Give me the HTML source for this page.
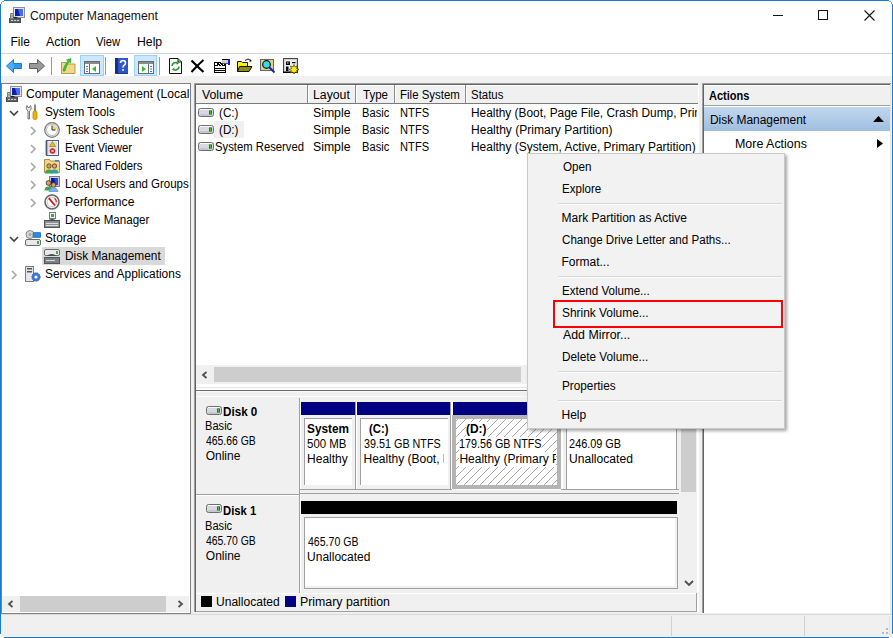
<!DOCTYPE html>
<html><head><meta charset="utf-8">
<style>
*{margin:0;padding:0;box-sizing:border-box}
html,body{width:893px;height:638px;overflow:hidden;background:#fff}
body{position:relative;font-family:"Liberation Sans",sans-serif;font-size:12px;color:#000}
.a{position:absolute}
.t{position:absolute;white-space:nowrap;line-height:14px;height:14px}
.b{font-weight:bold}
</style></head><body>
<div class="a" style="left:4px;top:0px;width:885px;height:1px;background:#1a7ad0"></div>
<div class="a" style="left:0px;top:4px;width:1px;height:630px;background:#1a7ad0"></div>
<div class="a" style="left:892px;top:4px;width:1px;height:630px;background:#1a7ad0"></div>
<div class="a" style="left:4px;top:637px;width:885px;height:1px;background:#1a7ad0"></div>
<div class="a" style="left:3px;top:1px;width:1px;height:1px;background:#1a7ad0;opacity:.6"></div>
<div class="a" style="left:2px;top:1px;width:1px;height:1px;background:#1a7ad0;opacity:.6"></div>
<div class="a" style="left:1px;top:2px;width:1px;height:1px;background:#1a7ad0;opacity:.6"></div>
<div class="a" style="left:1px;top:3px;width:1px;height:1px;background:#1a7ad0;opacity:.6"></div>
<div class="a" style="left:889px;top:1px;width:1px;height:1px;background:#1a7ad0;opacity:.6"></div>
<div class="a" style="left:890px;top:1px;width:1px;height:1px;background:#1a7ad0;opacity:.6"></div>
<div class="a" style="left:891px;top:2px;width:1px;height:1px;background:#1a7ad0;opacity:.6"></div>
<div class="a" style="left:891px;top:3px;width:1px;height:1px;background:#1a7ad0;opacity:.6"></div>
<div class="a" style="left:1px;top:634px;width:1px;height:1px;background:#1a7ad0;opacity:.6"></div>
<div class="a" style="left:1px;top:635px;width:1px;height:1px;background:#1a7ad0;opacity:.6"></div>
<div class="a" style="left:2px;top:636px;width:1px;height:1px;background:#1a7ad0;opacity:.6"></div>
<div class="a" style="left:3px;top:636px;width:1px;height:1px;background:#1a7ad0;opacity:.6"></div>
<div class="a" style="left:889px;top:636px;width:1px;height:1px;background:#1a7ad0;opacity:.6"></div>
<div class="a" style="left:890px;top:636px;width:1px;height:1px;background:#1a7ad0;opacity:.6"></div>
<div class="a" style="left:891px;top:635px;width:1px;height:1px;background:#1a7ad0;opacity:.6"></div>
<div class="a" style="left:891px;top:634px;width:1px;height:1px;background:#1a7ad0;opacity:.6"></div>
<svg class="a" style="left:9px;top:7px;" width="16" height="16" viewBox="0 0 16 16"><rect x="4.5" y="0.5" width="11" height="10" fill="#e4e6ea" stroke="#8a8f96"/><rect x="6" y="2" width="8" height="7" fill="#4a6cf0"/><path d="M6 2h3l2 7H6z" fill="#0c1fa8"/><rect x="0.5" y="11.5" width="11" height="4" fill="#5c6066" stroke="#4a4e54"/><rect x="2" y="13" width="2" height="1" fill="#cfd2d6"/><rect x="5" y="13" width="2" height="1" fill="#cfd2d6"/><rect x="8" y="13" width="2" height="1" fill="#cfd2d6"/><path d="M1.5 6.5h3v5h-3z" fill="#b8bcc0" stroke="#7a7e84" stroke-width="1"/><path d="M2.5 8h1v2h-1z" fill="#3bb03b"/><path d="M4 11 q2.5-2.5 5 0" fill="#222"/></svg>
<div class="t " style="left:30.00px;top:8.80px;transform:scaleX(1.0144);transform-origin:1px 0;color:#111">Computer Management</div>
<div class="a" style="left:773px;top:15px;width:10px;height:1px;background:#111"></div>
<div class="a" style="left:818px;top:10px;width:10px;height:10px;border:1px solid #111"></div>
<svg class="a" style="left:864px;top:10px;" width="11" height="11" viewBox="0 0 11 11"><path d="M0.5 0.5L10.5 10.5M10.5 0.5L0.5 10.5" stroke="#111" stroke-width="1.1"/></svg>
<div class="t " style="left:10.50px;top:34.80px;">File</div>
<div class="t " style="left:45.50px;top:34.80px;transform:scaleX(1.0333);transform-origin:0px 0;">Action</div>
<div class="t " style="left:96.40px;top:34.80px;transform:scaleX(0.9346);transform-origin:0px 0;">View</div>
<div class="t " style="left:136.50px;top:34.80px;transform:scaleX(1.0217);transform-origin:1px 0;">Help</div>
<div class="a" style="left:1px;top:53px;width:891px;height:1px;background:#d5d5d5"></div>
<svg class="a" style="left:5px;top:58px;" width="18" height="16" viewBox="0 0 18 16"><path d="M1.5 8L8.5 1.5V5.5H16.5V10.5H8.5V14.5Z" fill="#48aef0" stroke="#1f7ad0" stroke-width="1"/><path d="M9 6h7v4H9z" fill="#1e8ae0" opacity=".6"/></svg>
<svg class="a" style="left:28px;top:58px;" width="18" height="16" viewBox="0 0 18 16"><path d="M16.5 8L9.5 1.5V5.5H1.5V10.5H9.5V14.5Z" fill="#9a9a9a" stroke="#5e5e5e" stroke-width="1"/></svg>
<div class="a" style="left:51px;top:57px;width:1px;height:18px;background:#9a9a9a"></div>
<svg class="a" style="left:60px;top:57px;" width="16" height="18" viewBox="0 0 16 18"><path d="M1.5 5.5h5l1 1.5h7.5v9.5h-13.5z" fill="#f3d68a" stroke="#c09a48"/><path d="M3 14 C4 9 6 6 8 4 L6.5 3 L11 1.5 L10.5 6 L9.2 4.8 C7.5 7 6 10 5 14z" fill="#38c838" stroke="#1f9a1f" stroke-width=".6"/></svg>
<div class="a" style="left:80px;top:55px;width:24px;height:21px;background:#cce8ff;border:1px solid #99d1ff"></div>
<svg class="a" style="left:84px;top:61px;" width="16" height="13" viewBox="0 0 16 13"><rect x="0.5" y="0.5" width="15" height="12" fill="#fff" stroke="#6a6a6a"/><rect x="1" y="1" width="14" height="2" fill="#8a8a8a"/><path d="M5.5 3v9.5" stroke="#6a6a6a"/><rect x="2" y="5" width="2" height="1" fill="#3c7ad8"/><rect x="2" y="7.5" width="2" height="1" fill="#3c7ad8"/><rect x="2" y="10" width="2" height="1" fill="#3c7ad8"/><path d="M12 5v6L8 8z" fill="#3ab53a"/></svg>
<div class="a" style="left:105px;top:57px;width:1px;height:18px;background:#9a9a9a"></div>
<svg class="a" style="left:115px;top:58px;" width="13" height="16" viewBox="0 0 13 16"><rect x="0" y="0" width="13" height="16" fill="#2c55c8"/><rect x="0" y="0" width="3" height="16" fill="#12308a"/><rect x="0" y="15" width="13" height="1" fill="#1a3a9a"/><path d="M5.5 5 q0-2.5 2.5-2.5 q2.5 0 2.5 2.5 q0 1.5-1.7 2.5 q-0.8 .5-.8 2" fill="none" stroke="#fff" stroke-width="1.6"/><rect x="7.2" y="11" width="1.7" height="1.8" fill="#fff"/></svg>
<div class="a" style="left:134px;top:55px;width:23px;height:21px;background:#cce8ff;border:1px solid #99d1ff"></div>
<svg class="a" style="left:138px;top:61px;" width="16" height="13" viewBox="0 0 16 13"><rect x="0.5" y="0.5" width="15" height="12" fill="#fff" stroke="#6a6a6a"/><rect x="1" y="1" width="14" height="2" fill="#8a8a8a"/><path d="M10.5 3v9.5" stroke="#6a6a6a"/><rect x="12" y="5" width="2" height="1" fill="#3c7ad8"/><rect x="12" y="7.5" width="2" height="1" fill="#3c7ad8"/><rect x="12" y="10" width="2" height="1" fill="#3c7ad8"/><path d="M4 5v6l4-3z" fill="#3ab53a"/></svg>
<div class="a" style="left:159px;top:57px;width:1px;height:18px;background:#9a9a9a"></div>
<svg class="a" style="left:168px;top:58px;" width="15" height="16" viewBox="0 0 15 16"><path d="M1.5 0.5h8.5l3.5 3.5v11.5h-12z" fill="#fff" stroke="#111"/><path d="M10 0.5v3.5h3.5" fill="none" stroke="#111"/><path d="M4 8a3.5 3.5 0 0 1 5.5-2.8" fill="none" stroke="#1ea01e" stroke-width="1.6"/><path d="M8.5 3.5l2.5 1.5-2.2 2z" fill="#1ea01e"/><path d="M11 8.5a3.5 3.5 0 0 1-5.5 2.8" fill="none" stroke="#1ea01e" stroke-width="1.6"/><path d="M6.5 13l-2.5-1.5 2.2-2z" fill="#1ea01e"/></svg>
<svg class="a" style="left:190px;top:59px;" width="15" height="14" viewBox="0 0 15 14"><path d="M1.5 1.5 C5 5 10 10 13.5 13" stroke="#000" stroke-width="2.2" fill="none"/><path d="M13.5 1 C10 4 5 9 1.5 13" stroke="#000" stroke-width="2" fill="none"/></svg>
<svg class="a" style="left:213px;top:57px;" width="17" height="17" viewBox="0 0 17 17"><rect x="1" y="5" width="12" height="11" fill="#000"/><rect x="2" y="9" width="10" height="2" fill="#f0f0f0"/><rect x="2" y="12" width="10" height="1" fill="#f0f0f0"/><rect x="2" y="14" width="10" height="1" fill="#f0f0f0"/><rect x="2" y="6" width="2" height="2" fill="#fff"/><path d="M5 8h1v1h-1zM7 7h1v1h-1zM6 6h1v1h-1zM8 5h1v1h-1zM9 6h1v1h-1zM10 7h1v1h-1zM8 8h1v1h-1zM11 6h1v1h-1zM10 5h1v1h-1z" fill="#fff"/><rect x="9" y="2" width="6" height="5" fill="#cfcfcf"/><rect x="9" y="2" width="6" height="1" fill="#000"/><rect x="9" y="6" width="6" height="1" fill="#555"/><rect x="15" y="2" width="2" height="6" fill="#1020d0"/></svg>
<svg class="a" style="left:237px;top:58px;" width="16" height="14" viewBox="0 0 16 14"><path d="M0.5 3.5h4l1 1h5v8.5H0.5z" fill="#fff200" stroke="#111"/><path d="M2.5 8.5h12.5l-3 5H0.5z" fill="#8c8c1c" stroke="#111"/><path d="M8 2.5 q3-3 6 0" fill="none" stroke="#111"/><path d="M13 1.5l2 1.5-2.5 1z" fill="#111"/></svg>
<svg class="a" style="left:260px;top:58px;" width="16" height="16" viewBox="0 0 16 16"><rect x="0.5" y="1.5" width="13" height="11" fill="#f4e870" stroke="#666"/><rect x="1" y="2" width="12" height="10" fill="#c8c0a0" opacity=".5"/><circle cx="6.5" cy="6.5" r="3.8" fill="#40d8e8" stroke="#111" stroke-width="1.2"/><path d="M9 9l5.5 5.5" stroke="#1020c0" stroke-width="1.8"/></svg>
<svg class="a" style="left:283px;top:58px;" width="16" height="16" viewBox="0 0 16 16"><rect x="0.5" y="0.5" width="14" height="14" fill="#d0d0d0" stroke="#444"/><rect x="2" y="2" width="11" height="11" fill="#ececec"/><rect x="0" y="13.5" width="15" height="1.5" fill="#000"/><rect x="3" y="3.5" width="4" height="3.5" fill="#000"/><rect x="4" y="4.5" width="1.5" height="1" fill="#fff"/><rect x="9" y="4" width="3.5" height="1.2" fill="#000"/><rect x="3" y="8.5" width="2.5" height="4.5" fill="#000"/><path d="M11 6.5l1 2.5 2.5-1-1 2.5 2.5 1-2.5 1 1 2.5-2.5-1-1 2.5-1-2.5-2.5 1 1-2.5-2.5-1 2.5-1-1-2.5 2.5 1z" fill="#ffee00" stroke="#222" stroke-width=".6"/></svg>
<div class="a" style="left:1px;top:76px;width:891px;height:538px;background:#f0f0f0"></div>
<div class="a" style="left:1px;top:83px;width:190px;height:531px;background:#fff;border:1px solid #828282"></div>
<div class="t " style="left:26.30px;top:87.30px;transform:scaleX(1.0081);transform-origin:1px 0;">Computer Management (Local</div>
<svg class="a" style="left:9px;top:110px;" width="10" height="7" viewBox="0 0 10 7"><path d="M1 1l4 4 4-4" fill="none" stroke="#404040" stroke-width="1.6"/></svg>
<div class="t " style="left:45.00px;top:105.30px;transform:scaleX(0.9814);transform-origin:1px 0;">System Tools</div>
<svg class="a" style="left:30px;top:126px;" width="7" height="10" viewBox="0 0 7 10"><path d="M1 1l4 4-4 4" fill="none" stroke="#a6a6a6" stroke-width="1.6"/></svg>
<div class="t " style="left:65.50px;top:123.30px;transform:scaleX(0.9415);transform-origin:0px 0;">Task Scheduler</div>
<svg class="a" style="left:30px;top:144px;" width="7" height="10" viewBox="0 0 7 10"><path d="M1 1l4 4-4 4" fill="none" stroke="#a6a6a6" stroke-width="1.6"/></svg>
<div class="t " style="left:64.50px;top:141.30px;transform:scaleX(0.9514);transform-origin:1px 0;">Event Viewer</div>
<svg class="a" style="left:30px;top:162px;" width="7" height="10" viewBox="0 0 7 10"><path d="M1 1l4 4-4 4" fill="none" stroke="#a6a6a6" stroke-width="1.6"/></svg>
<div class="t " style="left:64.50px;top:159.30px;transform:scaleX(0.9444);transform-origin:1px 0;">Shared Folders</div>
<svg class="a" style="left:30px;top:180px;" width="7" height="10" viewBox="0 0 7 10"><path d="M1 1l4 4-4 4" fill="none" stroke="#a6a6a6" stroke-width="1.6"/></svg>
<div class="t " style="left:64.50px;top:177.30px;transform:scaleX(0.9555);transform-origin:1px 0;">Local Users and Groups</div>
<svg class="a" style="left:30px;top:198px;" width="7" height="10" viewBox="0 0 7 10"><path d="M1 1l4 4-4 4" fill="none" stroke="#a6a6a6" stroke-width="1.6"/></svg>
<div class="t " style="left:64.50px;top:195.30px;transform:scaleX(1.0104);transform-origin:1px 0;">Performance</div>
<div class="t " style="left:64.50px;top:213.30px;transform:scaleX(0.9655);transform-origin:1px 0;">Device Manager</div>
<svg class="a" style="left:9px;top:236px;" width="10" height="7" viewBox="0 0 10 7"><path d="M1 1l4 4 4-4" fill="none" stroke="#404040" stroke-width="1.6"/></svg>
<div class="t " style="left:45.00px;top:231.30px;transform:scaleX(0.9805);transform-origin:1px 0;">Storage</div>
<div class="a" style="left:42px;top:247px;width:123px;height:18px;background:#d9d9d9"></div>
<div class="t " style="left:64.50px;top:249.30px;transform:scaleX(0.9896);transform-origin:1px 0;">Disk Management</div>
<svg class="a" style="left:11px;top:270px;" width="7" height="10" viewBox="0 0 7 10"><path d="M1 1l4 4-4 4" fill="none" stroke="#a6a6a6" stroke-width="1.6"/></svg>
<div class="t " style="left:45.00px;top:267.30px;transform:scaleX(0.9933);transform-origin:1px 0;">Services and Applications</div>
<svg class="a" style="left:6px;top:86px;" width="16" height="16" viewBox="0 0 16 16"><rect x="4.5" y="0.5" width="11" height="10" fill="#e4e6ea" stroke="#8a8f96"/><rect x="6" y="2" width="8" height="7" fill="#4a6cf0"/><path d="M6 2h3l2 7H6z" fill="#0c1fa8"/><rect x="0.5" y="11.5" width="11" height="4" fill="#5c6066" stroke="#4a4e54"/><rect x="2" y="13" width="2" height="1" fill="#cfd2d6"/><rect x="5" y="13" width="2" height="1" fill="#cfd2d6"/><rect x="8" y="13" width="2" height="1" fill="#cfd2d6"/><path d="M1.5 6.5h3v5h-3z" fill="#b8bcc0" stroke="#7a7e84" stroke-width="1"/><path d="M2.5 8h1v2h-1z" fill="#3bb03b"/><path d="M4 11 q2.5-2.5 5 0" fill="#222"/></svg>
<svg class="a" style="left:25px;top:104px;" width="16" height="16" viewBox="0 0 16 16"><path d="M3 15V7 C1 6 1 3 2 1.5 L3 3.5 L4.5 3.5 L5.5 1.5 C6.5 3 6.5 6 4.5 7 V15z" fill="#e8e8e8" stroke="#6a6a6a" stroke-width=".9"/><rect x="9.3" y="0.5" width="1.4" height="7" fill="#555"/><rect x="8" y="7" width="4" height="8.5" rx="1.5" fill="#f0b400" stroke="#b07800" stroke-width=".7"/></svg>
<svg class="a" style="left:44px;top:122px;" width="16" height="16" viewBox="0 0 16 16"><circle cx="8" cy="8" r="7.3" fill="#e8e8e8" stroke="#7a7a7a" stroke-width="1.2"/><circle cx="8" cy="8" r="5.5" fill="#fff" stroke="#9a9a9a" stroke-width=".6"/><path d="M8 8V3.5A4.5 4.5 0 0 1 12.5 8z" fill="#f3d070"/><path d="M8 3.5V8h3.5" fill="none" stroke="#333" stroke-width="1"/></svg>
<svg class="a" style="left:44px;top:140px;" width="16" height="16" viewBox="0 0 16 16"><rect x="2.5" y="0.5" width="12" height="15" fill="#f4f6fb" stroke="#4a5a8a"/><path d="M4 3h9M4 5h9M4 7h9M4 9h9M4 11h9M4 13h9" stroke="#9ab0dc" stroke-width=".6"/><path d="M1 2h3M1 4h3M1 6h3M1 8h3M1 10h3M1 12h3M1 14h3" stroke="#555" stroke-width=".8"/><path d="M8.5 1.5l3 5h-6z" fill="#f3c400" stroke="#8a6a00" stroke-width=".6"/><circle cx="8.5" cy="11" r="2.8" fill="#d42020"/><path d="M7.3 9.8l2.4 2.4M9.7 9.8l-2.4 2.4" stroke="#fff" stroke-width=".9"/></svg>
<svg class="a" style="left:44px;top:158px;" width="16" height="16" viewBox="0 0 16 16"><path d="M0.5 1.5h5l1 1.5h9v11.5H0.5z" fill="#f1d68e" stroke="#b0903e"/><rect x="11" y="2" width="4" height="1.5" fill="#3a7ad8"/><circle cx="5" cy="8" r="2.2" fill="#d8a060" stroke="#4a2a10" stroke-width=".7"/><path d="M1 15.5a4 4 0 0 1 8 0z" fill="#3aa84a"/><circle cx="10.5" cy="8" r="2.2" fill="#d8a060" stroke="#4a2a10" stroke-width=".7"/><path d="M6.5 15.5a4 4 0 0 1 8 0z" fill="#2aa0a0"/></svg>
<svg class="a" style="left:44px;top:176px;" width="16" height="16" viewBox="0 0 16 16"><rect x="5.5" y="0.5" width="10" height="10" fill="#c8ccd4" stroke="#7a7e84"/><rect x="7" y="2" width="7" height="7" fill="#2a4ad8"/><path d="M7 2h3l2 7H7z" fill="#0c1a9a"/><circle cx="4.5" cy="7" r="2.4" fill="#d8a060" stroke="#3a2010" stroke-width=".7"/><path d="M0.5 14.5a4 4 0 0 1 8 0z" fill="#3aa84a"/><circle cx="9.5" cy="9" r="2.4" fill="#d8a060" stroke="#3a2010" stroke-width=".7"/><path d="M5 16a4.5 4.5 0 0 1 9 0z" fill="#7ab0e8" stroke="#4a7ab8" stroke-width=".5"/></svg>
<svg class="a" style="left:44px;top:194px;" width="16" height="16" viewBox="0 0 16 16"><circle cx="8" cy="8" r="7" fill="#f4f4f4" stroke="#666" stroke-width="1.6"/><circle cx="8" cy="8" r="4.8" fill="#fff" stroke="#aaa" stroke-width=".6"/><path d="M4.8 4.2L11 11.5" stroke="#d81818" stroke-width="1.9"/><path d="M10.5 4.2a5 5 0 0 1 1.8 4" fill="none" stroke="#d81818" stroke-width="1.2"/></svg>
<svg class="a" style="left:44px;top:212px;" width="16" height="16" viewBox="0 0 16 16"><rect x="0.5" y="8.5" width="15" height="7" fill="#8a9098" stroke="#555"/><rect x="2" y="11" width="12" height="1" fill="#ddd"/><rect x="2" y="13" width="12" height="1" fill="#ddd"/><rect x="5.5" y="0.5" width="6" height="6" fill="#f4f4f4" stroke="#777"/><rect x="7" y="2" width="3" height="3" fill="#3aa84a"/><path d="M4 8.5 q4-3 8 0" fill="#333"/></svg>
<svg class="a" style="left:25px;top:230px;" width="16" height="16" viewBox="0 0 16 16"><circle cx="5" cy="4.5" r="4" fill="#d8d8d8" stroke="#888"/><circle cx="5" cy="4.5" r="1" fill="#fff" stroke="#555" stroke-width=".6"/><rect x="8" y="2.5" width="8" height="5" rx="1" fill="#2a8ae0" stroke="#1a5aa0" stroke-width=".6"/><rect x="0.5" y="9.5" width="15" height="6" rx="1.5" fill="#e8e8e8" stroke="#6a6a6a"/><rect x="12" y="11" width="2" height="3" fill="#3ab53a"/></svg>
<svg class="a" style="left:44px;top:248px;" width="16" height="16" viewBox="0 0 16 16"><rect x="0.5" y="1.5" width="15" height="6" rx="1.5" fill="#eaeaea" stroke="#6a6a6a"/><rect x="12" y="3" width="2" height="3" fill="#3ab53a"/><path d="M3 7.5 q5-2.5 9 0" fill="#222"/><rect x="0.5" y="9.5" width="15" height="6" fill="#7a8088" stroke="#555"/><rect x="2" y="12" width="9" height="1" fill="#ddd"/></svg>
<svg class="a" style="left:25px;top:266px;" width="16" height="16" viewBox="0 0 16 16"><rect x="0.5" y="0.5" width="8" height="15" fill="#e4e6ea" stroke="#7a7e84"/><rect x="2" y="2" width="5" height="1.5" fill="#555"/><rect x="2" y="5" width="5" height="1.5" fill="#555"/><circle cx="11" cy="11" r="4.2" fill="#3a7ad8" stroke="#2050a0" stroke-width=".8" stroke-dasharray="1.5 1"/><circle cx="11" cy="11" r="1.6" fill="#fff"/></svg>
<div class="a" style="left:2px;top:596px;width:187px;height:16px;background:#f0f0f0"></div>
<div class="a" style="left:20px;top:596px;width:146px;height:16px;background:#cdcdcd"></div>
<svg class="a" style="left:7px;top:600px;" width="7" height="8" viewBox="0 0 7 8"><path d="M5.5 1L2 4l3.5 3" fill="none" stroke="#505050" stroke-width="1.8"/></svg>
<svg class="a" style="left:177px;top:600px;" width="7" height="8" viewBox="0 0 7 8"><path d="M1.5 1L5 4 1.5 7" fill="none" stroke="#505050" stroke-width="1.8"/></svg>
<div class="a" style="left:191px;top:84px;width:3px;height:100px;background:#f0f0f0"></div>
<div class="a" style="left:190px;top:83px;width:1px;height:531px;background:#828282"></div>
<div class="a" style="left:194px;top:83px;width:504px;height:529px;background:#fff"></div>
<div class="a" style="left:194px;top:83px;width:504px;height:1px;background:#a0a0a0"></div>
<div class="a" style="left:194px;top:83px;width:1px;height:529px;background:#a0a0a0"></div>
<div class="a" style="left:195px;top:84px;width:503px;height:1px;background:#646464"></div>
<div class="a" style="left:195px;top:84px;width:1px;height:528px;background:#646464"></div>
<div class="a" style="left:196px;top:85px;width:502px;height:18px;background:#f0f0f0"></div>
<div class="a" style="left:196px;top:85px;width:502px;height:1px;background:#fff"></div>
<div class="a" style="left:196px;top:103px;width:502px;height:1px;background:#7a7a7a"></div>
<div class="a" style="left:307px;top:85px;width:1px;height:18px;background:#8a8a8a"></div>
<div class="a" style="left:308px;top:86px;width:1px;height:17px;background:#fff"></div>
<div class="a" style="left:355px;top:85px;width:1px;height:18px;background:#8a8a8a"></div>
<div class="a" style="left:356px;top:86px;width:1px;height:17px;background:#fff"></div>
<div class="a" style="left:394px;top:85px;width:1px;height:18px;background:#8a8a8a"></div>
<div class="a" style="left:395px;top:86px;width:1px;height:17px;background:#fff"></div>
<div class="a" style="left:465px;top:85px;width:1px;height:18px;background:#8a8a8a"></div>
<div class="a" style="left:466px;top:86px;width:1px;height:17px;background:#fff"></div>
<div class="t " style="left:202.00px;top:87.80px;transform:scaleX(1.0250);transform-origin:0px 0;">Volume</div>
<div class="t " style="left:313.30px;top:87.80px;transform:scaleX(1.0229);transform-origin:1px 0;">Layout</div>
<div class="t " style="left:362.70px;top:87.80px;transform:scaleX(0.9615);transform-origin:0px 0;">Type</div>
<div class="t " style="left:400.20px;top:87.80px;transform:scaleX(0.9541);transform-origin:1px 0;">File System</div>
<div class="t " style="left:471.30px;top:87.80px;transform:scaleX(0.9485);transform-origin:1px 0;">Status</div>
<svg class="a" style="left:198px;top:108px;" width="16" height="9" viewBox="0 0 16 9"><rect x="0.5" y="0.5" width="15" height="8" rx="2" fill="#d8d8e0" stroke="#6e6e6e"/><rect x="2" y="1" width="12" height="1" fill="#fafafa"/><rect x="2" y="6.5" width="12" height="1" fill="#b4b4bc"/><rect x="11" y="2.5" width="3" height="4" fill="#2a3a8a"/><rect x="11.7" y="2.5" width="1.6" height="4" fill="#48c020"/></svg>
<div class="t " style="left:218.50px;top:105.80px;transform:scaleX(0.9722);transform-origin:1px 0;">(C:)</div>
<div class="t " style="left:313.30px;top:105.80px;transform:scaleX(1.0229);transform-origin:1px 0;">Simple</div>
<div class="t " style="left:361.70px;top:105.80px;transform:scaleX(0.9250);transform-origin:1px 0;">Basic</div>
<div class="t " style="left:400.20px;top:105.80px;transform:scaleX(0.9267);transform-origin:1px 0;">NTFS</div>
<div class="t " style="left:471.30px;top:105.80px;transform:scaleX(0.9907);transform-origin:1px 0;">Healthy (Boot, Page File, Crash Dump, Primary Partition)</div>
<svg class="a" style="left:198px;top:125px;" width="16" height="9" viewBox="0 0 16 9"><rect x="0.5" y="0.5" width="15" height="8" rx="2" fill="#d8d8e0" stroke="#6e6e6e"/><rect x="2" y="1" width="12" height="1" fill="#fafafa"/><rect x="2" y="6.5" width="12" height="1" fill="#b4b4bc"/><rect x="11" y="2.5" width="3" height="4" fill="#2a3a8a"/><rect x="11.7" y="2.5" width="1.6" height="4" fill="#48c020"/></svg>
<div class="a" style="left:214px;top:121px;width:30px;height:17px;background:#f0f0f0"></div>
<div class="t " style="left:218.50px;top:122.80px;transform:scaleX(0.9722);transform-origin:1px 0;">(D:)</div>
<div class="t " style="left:313.30px;top:122.80px;transform:scaleX(1.0229);transform-origin:1px 0;">Simple</div>
<div class="t " style="left:361.70px;top:122.80px;transform:scaleX(0.9250);transform-origin:1px 0;">Basic</div>
<div class="t " style="left:400.20px;top:122.80px;transform:scaleX(0.9267);transform-origin:1px 0;">NTFS</div>
<div class="t " style="left:471.30px;top:122.80px;transform:scaleX(1.0050);transform-origin:1px 0;">Healthy (Primary Partition)</div>
<svg class="a" style="left:198px;top:142px;" width="16" height="9" viewBox="0 0 16 9"><rect x="0.5" y="0.5" width="15" height="8" rx="2" fill="#d8d8e0" stroke="#6e6e6e"/><rect x="2" y="1" width="12" height="1" fill="#fafafa"/><rect x="2" y="6.5" width="12" height="1" fill="#b4b4bc"/><rect x="11" y="2.5" width="3" height="4" fill="#2a3a8a"/><rect x="11.7" y="2.5" width="1.6" height="4" fill="#48c020"/></svg>
<div class="t " style="left:215.20px;top:139.80px;transform:scaleX(0.9387);transform-origin:1px 0;">System Reserved</div>
<div class="t " style="left:313.30px;top:139.80px;transform:scaleX(1.0229);transform-origin:1px 0;">Simple</div>
<div class="t " style="left:361.70px;top:139.80px;transform:scaleX(0.9250);transform-origin:1px 0;">Basic</div>
<div class="t " style="left:400.20px;top:139.80px;transform:scaleX(0.9267);transform-origin:1px 0;">NTFS</div>
<div class="t " style="left:471.30px;top:139.80px;transform:scaleX(0.9938);transform-origin:1px 0;">Healthy (System, Active, Primary Partition)</div>
<div class="a" style="left:697px;top:104px;width:1px;height:262px;background:#fff"></div>
<div class="a" style="left:698px;top:83px;width:4px;height:529px;background:#f0f0f0"></div>
<div class="a" style="left:698px;top:85px;width:1px;height:527px;background:#fff"></div>
<div class="a" style="left:196px;top:365px;width:501px;height:19px;background:#f0f0f0"></div>
<div class="a" style="left:214px;top:367px;width:307px;height:15px;background:#cdcdcd"></div>
<svg class="a" style="left:201px;top:371px;" width="7" height="8" viewBox="0 0 7 8"><path d="M5.5 1L2 4l3.5 3" fill="none" stroke="#505050" stroke-width="1.8"/></svg>
<div class="a" style="left:196px;top:384px;width:501px;height:6px;background:#fff"></div>
<div class="a" style="left:196px;top:390px;width:501px;height:1px;background:#6e6e6e"></div>
<div class="a" style="left:196px;top:391px;width:501px;height:220px;background:#f0f0f0"></div>
<div class="a" style="left:196px;top:387px;width:501px;height:1px;background:#e6e6e6"></div>
<div class="a" style="left:196px;top:391px;width:501px;height:1px;background:#fafafa"></div>
<div class="a" style="left:196px;top:396px;width:483px;height:1px;background:#fcfcfc"></div>
<div class="a" style="left:299px;top:398px;width:1px;height:213px;background:#a0a0a0"></div>
<div class="a" style="left:300px;top:398px;width:1px;height:213px;background:#fff"></div>
<svg class="a" style="left:206px;top:406px;" width="16" height="9" viewBox="0 0 16 9"><rect x="0.5" y="0.5" width="15" height="8" rx="2" fill="#d8d8e0" stroke="#6e6e6e"/><rect x="2" y="1" width="12" height="1" fill="#fafafa"/><rect x="2" y="6.5" width="12" height="1" fill="#b4b4bc"/><rect x="11" y="2.5" width="3" height="4" fill="#2a3a8a"/><rect x="11.7" y="2.5" width="1.6" height="4" fill="#48c020"/></svg>
<div class="t b" style="left:222.80px;top:404.80px;transform:scaleX(0.9706);transform-origin:1px 0;">Disk 0</div>
<div class="t " style="left:204.70px;top:419.30px;transform:scaleX(0.9214);transform-origin:1px 0;">Basic</div>
<div class="t " style="left:205.70px;top:434.30px;transform:scaleX(0.8667);transform-origin:0px 0;">465.66 GB</div>
<div class="t " style="left:205.70px;top:449.30px;">Online</div>
<svg class="a" style="left:206px;top:504px;" width="16" height="9" viewBox="0 0 16 9"><rect x="0.5" y="0.5" width="15" height="8" rx="2" fill="#d8d8e0" stroke="#6e6e6e"/><rect x="2" y="1" width="12" height="1" fill="#fafafa"/><rect x="2" y="6.5" width="12" height="1" fill="#b4b4bc"/><rect x="11" y="2.5" width="3" height="4" fill="#2a3a8a"/><rect x="11.7" y="2.5" width="1.6" height="4" fill="#48c020"/></svg>
<div class="t b" style="left:222.60px;top:503.80px;transform:scaleX(0.9382);transform-origin:1px 0;">Disk 1</div>
<div class="t " style="left:204.80px;top:518.80px;transform:scaleX(0.9214);transform-origin:1px 0;">Basic</div>
<div class="t " style="left:205.80px;top:533.80px;transform:scaleX(0.8667);transform-origin:0px 0;">465.70 GB</div>
<div class="t " style="left:205.80px;top:548.80px;">Online</div>
<div class="a" style="left:196px;top:494px;width:103px;height:1px;background:#a0a0a0"></div>
<div class="a" style="left:196px;top:495px;width:103px;height:1px;background:#fff"></div>
<div class="a" style="left:301px;top:402px;width:54px;height:13px;background:#000080"></div>
<div class="a" style="left:304px;top:418px;width:48px;height:67px;background:#fff;border-left:1px solid #a0a0a0;border-top:1px solid #a0a0a0"></div>
<div class="a" style="left:355px;top:402px;width:1px;height:88px;background:#a0a0a0"></div>
<div class="a" style="left:356px;top:402px;width:1px;height:88px;background:#fff"></div>
<div class="a" style="left:357px;top:402px;width:93px;height:13px;background:#000080"></div>
<div class="a" style="left:360px;top:418px;width:88px;height:67px;background:#fff;border-left:1px solid #a0a0a0;border-top:1px solid #a0a0a0"></div>
<div class="a" style="left:450px;top:402px;width:1px;height:88px;background:#a0a0a0"></div>
<div class="a" style="left:451px;top:402px;width:2px;height:88px;background:#fff"></div>
<div class="a" style="left:453px;top:402px;width:108px;height:13px;background:#000080"></div>
<div class="a" style="left:452px;top:415px;width:109px;height:74px;background:#b4b4b4"></div>
<svg class="a" style="left:456px;top:419px;" width="101" height="66" viewBox="0 0 101 66"><defs><pattern id="h" x="2" width="8" height="8" patternUnits="userSpaceOnUse"><rect x="0" y="7" width="1" height="1" fill="#a8a8a8"/><rect x="1" y="6" width="1" height="1" fill="#a8a8a8"/><rect x="2" y="5" width="1" height="1" fill="#a8a8a8"/><rect x="3" y="4" width="1" height="1" fill="#a8a8a8"/><rect x="4" y="3" width="1" height="1" fill="#a8a8a8"/><rect x="5" y="2" width="1" height="1" fill="#a8a8a8"/><rect x="6" y="1" width="1" height="1" fill="#a8a8a8"/><rect x="7" y="0" width="1" height="1" fill="#a8a8a8"/></pattern></defs><rect width="101" height="66" fill="#fff"/><rect width="101" height="66" fill="url(#h)"/></svg>
<div class="a" style="left:561px;top:402px;width:2px;height:88px;background:#fff"></div>
<div class="a" style="left:563px;top:402px;width:114px;height:13px;background:#000"></div>
<div class="a" style="left:566px;top:418px;width:111px;height:71px;background:#fff;border-left:1px solid #a0a0a0;border-top:1px solid #a0a0a0;border-right:1px solid #a0a0a0"></div>
<div class="a" style="left:300px;top:489px;width:379px;height:1px;background:#a0a0a0"></div>
<div class="a" style="left:452px;top:489px;width:109px;height:1px;background:#fff"></div>
<div class="a" style="left:300px;top:493px;width:379px;height:1px;background:#a0a0a0"></div>
<div class="a" style="left:305px;top:418px;width:44px;height:20px;overflow:hidden"><div class="t b" style="left:2.10px;top:3.8px;transform:scaleX(0.9829);transform-origin:1px 0;">System</div></div>
<div class="a" style="left:305px;top:433px;width:44px;height:20px;overflow:hidden"><div class="t " style="left:2.10px;top:3.8px;transform:scaleX(0.9525);transform-origin:1px 0;">500 MB</div></div>
<div class="a" style="left:305px;top:448px;width:44px;height:20px;overflow:hidden"><div class="t " style="left:2.10px;top:3.8px;">Healthy</div></div>
<div class="a" style="left:361px;top:418px;width:83px;height:20px;overflow:hidden"><div class="t b" style="left:7.90px;top:3.8px;transform:scaleX(0.9421);transform-origin:1px 0;">(C:)</div></div>
<div class="a" style="left:361px;top:433px;width:83px;height:20px;overflow:hidden"><div class="t " style="left:2.50px;top:3.8px;transform:scaleX(0.8964);transform-origin:1px 0;">39.51 GB NTFS</div></div>
<div class="a" style="left:361px;top:448px;width:83px;height:20px;overflow:hidden"><div class="t " style="left:2.50px;top:3.8px;">Healthy (Boot, Page</div></div>
<div class="a" style="left:457px;top:418px;width:99px;height:20px;overflow:hidden"><div class="t b" style="left:8.60px;top:3.8px;transform:scaleX(0.9947);transform-origin:1px 0;background:#fff;height:15px;line-height:15px;padding-top:0">(D:)</div></div>
<div class="a" style="left:457px;top:433px;width:99px;height:20px;overflow:hidden"><div class="t " style="left:2.40px;top:3.8px;transform:scaleX(0.8956);transform-origin:1px 0;background:#fff;height:15px;line-height:15px;padding-top:0">179.56 GB NTFS</div></div>
<div class="a" style="left:457px;top:448px;width:99px;height:20px;overflow:hidden"><div class="t " style="left:2.40px;top:3.8px;background:#fff;height:15px;line-height:15px;padding-top:0">Healthy (Primary Partition)</div></div>
<div class="a" style="left:567px;top:433px;width:109px;height:20px;overflow:hidden"><div class="t " style="left:2.10px;top:3.8px;transform:scaleX(0.9054);transform-origin:1px 0;">246.09 GB</div></div>
<div class="a" style="left:567px;top:448px;width:109px;height:20px;overflow:hidden"><div class="t " style="left:2.10px;top:3.8px;transform:scaleX(1.0081);transform-origin:1px 0;">Unallocated</div></div>
<div class="a" style="left:352px;top:415px;width:3px;height:74px;background:#f0f0f0"></div>
<div class="a" style="left:448px;top:415px;width:2px;height:74px;background:#f0f0f0"></div>
<div class="a" style="left:557px;top:415px;width:4px;height:74px;background:#b4b4b4"></div>
<div class="a" style="left:301px;top:501px;width:376px;height:13px;background:#000"></div>
<div class="a" style="left:301px;top:514px;width:376px;height:79px;background:#f0f0f0"></div>
<div class="a" style="left:304px;top:517px;width:374px;height:72px;background:#fff;border:1px solid #a0a0a0;box-shadow:inset -2px -2px 0 #f0f0f0"></div>
<div class="t " style="left:308.10px;top:535.30px;transform:scaleX(0.8789);transform-origin:0px 0;">465.70 GB</div>
<div class="t " style="left:307.10px;top:550.30px;">Unallocated</div>
<div class="a" style="left:679px;top:391px;width:18px;height:202px;background:#f0f0f0"></div>
<div class="a" style="left:681px;top:391px;width:15px;height:101px;background:#cdcdcd"></div>
<svg class="a" style="left:684px;top:580px;" width="10" height="7" viewBox="0 0 10 7"><path d="M1 1l4 4 4-4" fill="none" stroke="#505050" stroke-width="1.8"/></svg>
<div class="a" style="left:196px;top:593px;width:501px;height:19px;background:#f0f0f0"></div>
<div class="a" style="left:196px;top:593px;width:501px;height:1px;background:#fff"></div>
<div class="a" style="left:696px;top:593px;width:1px;height:19px;background:#a0a0a0"></div>
<div class="a" style="left:196px;top:611px;width:501px;height:1px;background:#a0a0a0"></div>
<div class="a" style="left:201px;top:596px;width:11px;height:11px;background:#000"></div>
<div class="t " style="left:216.20px;top:594.50px;transform:scaleX(1.0048);transform-origin:1px 0;">Unallocated</div>
<div class="a" style="left:285px;top:596px;width:11px;height:11px;background:#000080"></div>
<div class="t " style="left:300.20px;top:594.50px;transform:scaleX(1.0291);transform-origin:1px 0;">Primary partition</div>
<div class="a" style="left:702px;top:83px;width:189px;height:530px;background:#fff"></div>
<div class="a" style="left:702px;top:83px;width:189px;height:1px;background:#a0a0a0"></div>
<div class="a" style="left:702px;top:83px;width:1px;height:530px;background:#a0a0a0"></div>
<div class="a" style="left:703px;top:84px;width:187px;height:1px;background:#646464"></div>
<div class="a" style="left:703px;top:84px;width:1px;height:529px;background:#646464"></div>
<div class="a" style="left:704px;top:85px;width:186px;height:1px;background:#fff"></div>
<div class="a" style="left:704px;top:86px;width:186px;height:19px;background:#f0f0f0"></div>
<div class="a" style="left:704px;top:105px;width:186px;height:1px;background:#a0a0a0"></div>
<div class="t b" style="left:709.40px;top:89.20px;transform:scaleX(0.9159);transform-origin:0px 0;">Actions</div>
<div class="a" style="left:704px;top:106px;width:186px;height:1px;background:#fff"></div>
<div class="a" style="left:704px;top:107px;width:186px;height:24px;background:linear-gradient(#c2d7ee,#a0bee0)"></div>
<div class="t " style="left:710.40px;top:113.40px;transform:scaleX(0.9938);transform-origin:1px 0;">Disk Management</div>
<svg class="a" style="left:873px;top:116px;" width="11" height="6" viewBox="0 0 11 6"><path d="M0 6L5.5 0 11 6z" fill="#000"/></svg>
<div class="t " style="left:734.60px;top:136.60px;transform:scaleX(1.0368);transform-origin:1px 0;">More Actions</div>
<svg class="a" style="left:877px;top:139px;" width="6" height="9" viewBox="0 0 6 9"><path d="M0 0L6 4.5 0 9z" fill="#000"/></svg>
<div class="a" style="left:890px;top:84px;width:1px;height:529px;background:#e6e6e6"></div>
<div class="a" style="left:1px;top:614px;width:891px;height:1px;background:#dadada"></div>
<div class="a" style="left:1px;top:615px;width:891px;height:22px;background:#f0f0f0"></div>
<div class="a" style="left:671px;top:616px;width:1px;height:20px;background:#d0d0d0"></div>
<div class="a" style="left:804px;top:616px;width:1px;height:20px;background:#d0d0d0"></div>
<div class="a" style="left:889px;top:616px;width:1px;height:20px;background:#e0e0e0"></div>
<div class="a" style="left:886px;top:632px;width:2px;height:2px;background:#b8b8b8"></div>
<div class="a" style="left:886px;top:628px;width:2px;height:2px;background:#b8b8b8"></div>
<div class="a" style="left:882px;top:632px;width:2px;height:2px;background:#b8b8b8"></div>
<div class="a" style="left:527px;top:153px;width:258px;height:276px;box-shadow:2px 2px 3px rgba(0,0,0,.35)"></div>
<div class="a" style="left:527px;top:153px;width:258px;height:276px;background:#f2f2f2;border:1px solid #c8c8c8"></div>
<div class="t " style="left:562.50px;top:159.70px;transform:scaleX(0.9724);transform-origin:0px 0;">Open</div>
<div class="t " style="left:561.50px;top:182.40px;transform:scaleX(0.9641);transform-origin:1px 0;">Explore</div>
<div class="t " style="left:561.50px;top:210.50px;">Mark Partition as Active</div>
<div class="t " style="left:561.50px;top:232.50px;transform:scaleX(0.9653);transform-origin:1px 0;">Change Drive Letter and Paths...</div>
<div class="t " style="left:561.50px;top:254.50px;">Format...</div>
<div class="t " style="left:561.50px;top:283.50px;transform:scaleX(0.9674);transform-origin:1px 0;">Extend Volume...</div>
<div class="t " style="left:561.50px;top:305.60px;transform:scaleX(0.9918);transform-origin:1px 0;">Shrink Volume...</div>
<div class="t " style="left:562.50px;top:327.50px;transform:scaleX(1.0297);transform-origin:0px 0;">Add Mirror...</div>
<div class="t " style="left:561.50px;top:349.50px;transform:scaleX(0.9802);transform-origin:1px 0;">Delete Volume...</div>
<div class="t " style="left:561.50px;top:378.50px;transform:scaleX(0.9792);transform-origin:1px 0;">Properties</div>
<div class="t " style="left:561.50px;top:408.10px;">Help</div>
<div class="a" style="left:558px;top:203px;width:224px;height:1px;background:#d7d7d7"></div>
<div class="a" style="left:558px;top:204px;width:224px;height:1px;background:#fcfcfc"></div>
<div class="a" style="left:558px;top:276px;width:224px;height:1px;background:#d7d7d7"></div>
<div class="a" style="left:558px;top:277px;width:224px;height:1px;background:#fcfcfc"></div>
<div class="a" style="left:558px;top:371px;width:224px;height:1px;background:#d7d7d7"></div>
<div class="a" style="left:558px;top:372px;width:224px;height:1px;background:#fcfcfc"></div>
<div class="a" style="left:558px;top:400px;width:224px;height:1px;background:#d7d7d7"></div>
<div class="a" style="left:558px;top:401px;width:224px;height:1px;background:#fcfcfc"></div>
<div class="a" style="left:553px;top:300px;width:230px;height:28px;border:2px solid #ff0000"></div>
</body></html>
